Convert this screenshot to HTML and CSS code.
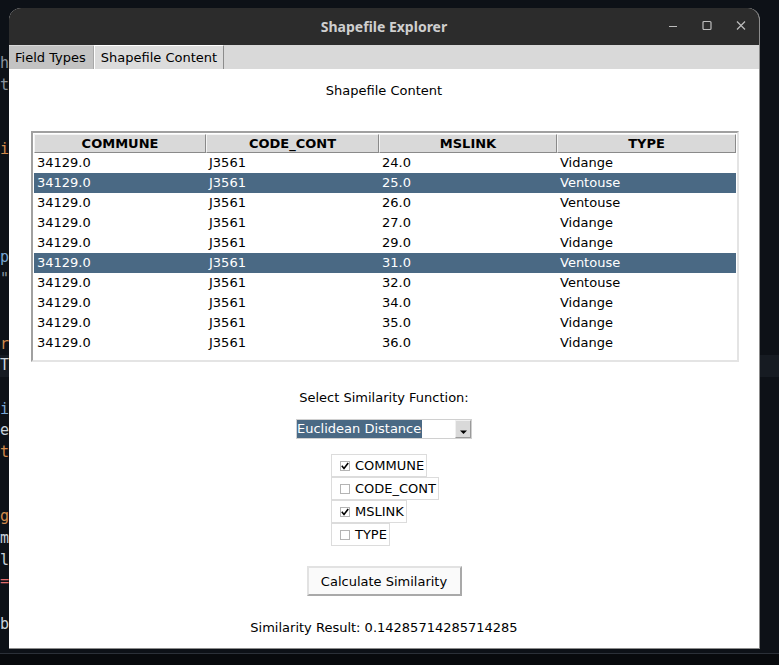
FILE: index.html
```html
<!DOCTYPE html>
<html>
<head>
<meta charset="utf-8">
<title>Shapefile Explorer</title>
<link rel="stylesheet" href="styles.css">
</head>
<body>
<div class="desktop">
  <pre class="editor"><span class="ln c-gray">h</span>
<span class="ln c-gray">t</span>
<span class="ln"> </span>
<span class="ln"> </span>
<span class="ln c-orange">i</span>
<span class="ln"> </span>
<span class="ln"> </span>
<span class="ln"> </span>
<span class="ln"> </span>
<span class="ln c-blue">p</span>
<span class="ln c-gray">"</span>
<span class="ln"> </span>
<span class="ln"> </span>
<span class="ln c-orange">r</span>
<span class="ln cur c-light">T</span>
<span class="ln"> </span>
<span class="ln c-blue">i</span>
<span class="ln c-light">e</span>
<span class="ln c-orange">t</span>
<span class="ln"> </span>
<span class="ln"> </span>
<span class="ln c-orange">g</span>
<span class="ln c-light">m</span>
<span class="ln c-light">l</span>
<span class="ln c-red">=</span>
<span class="ln"> </span>
<span class="ln c-light">b</span></pre>
  <div class="bottombar"></div>

  <div class="window">
    <div class="titlebar">
      <span class="title">Shapefile Explorer</span>
      <div class="controls">
        <svg width="12" height="12" viewBox="0 0 12 12"><path d="M2 6.5H10" stroke="#bdbdbd" stroke-width="1.2" fill="none"/></svg>
        <svg width="12" height="12" viewBox="0 0 12 12"><rect x="2" y="1.5" width="8" height="8" rx="1" stroke="#bdbdbd" stroke-width="1.2" fill="none"/></svg>
        <svg width="12" height="12" viewBox="0 0 12 12"><path d="M2 1.5L10 9.5M10 1.5L2 9.5" stroke="#bdbdbd" stroke-width="1.2" fill="none"/></svg>
      </div>
    </div>
    <div class="tabs">
      <div class="tab">Field Types</div>
      <div class="tab active">Shapefile Content</div>
    </div>
    <div class="pane">
      <div class="heading">Shapefile Content</div>
      <div class="tree">
        <div class="trow thead">
          <div class="th">COMMUNE</div>
          <div class="th">CODE_CONT</div>
          <div class="th">MSLINK</div>
          <div class="th">TYPE</div>
        </div>
        <div class="trow"><div class="td">34129.0</div><div class="td">J3561</div><div class="td">24.0</div><div class="td">Vidange</div></div>
        <div class="trow sel"><div class="td">34129.0</div><div class="td">J3561</div><div class="td">25.0</div><div class="td">Ventouse</div></div>
        <div class="trow"><div class="td">34129.0</div><div class="td">J3561</div><div class="td">26.0</div><div class="td">Ventouse</div></div>
        <div class="trow"><div class="td">34129.0</div><div class="td">J3561</div><div class="td">27.0</div><div class="td">Vidange</div></div>
        <div class="trow"><div class="td">34129.0</div><div class="td">J3561</div><div class="td">29.0</div><div class="td">Vidange</div></div>
        <div class="trow sel"><div class="td">34129.0</div><div class="td">J3561</div><div class="td">31.0</div><div class="td">Ventouse</div></div>
        <div class="trow"><div class="td">34129.0</div><div class="td">J3561</div><div class="td">32.0</div><div class="td">Ventouse</div></div>
        <div class="trow"><div class="td">34129.0</div><div class="td">J3561</div><div class="td">34.0</div><div class="td">Vidange</div></div>
        <div class="trow"><div class="td">34129.0</div><div class="td">J3561</div><div class="td">35.0</div><div class="td">Vidange</div></div>
        <div class="trow"><div class="td">34129.0</div><div class="td">J3561</div><div class="td">36.0</div><div class="td">Vidange</div></div>
      </div>

      <div class="label">Select Similarity Function:</div>
      <div class="combo">
        <span class="combo-text"><span class="combo-sel">Euclidean Distance</span></span>
        <span class="combo-btn"><svg width="9" height="6" viewBox="0 0 9 6"><path d="M1 1.5H8L4.5 5Z" fill="#000"/></svg></span>
      </div>

      <div class="checks">
        <label class="check"><span class="box"><svg width="8" height="8" viewBox="0 0 8 8"><path d="M0.8 3.8L3 6.4L7.2 1" stroke="#000" stroke-width="1.6" fill="none"/></svg></span>COMMUNE</label>
        <label class="check"><span class="box"></span>CODE_CONT</label>
        <label class="check"><span class="box"><svg width="8" height="8" viewBox="0 0 8 8"><path d="M0.8 3.8L3 6.4L7.2 1" stroke="#000" stroke-width="1.6" fill="none"/></svg></span>MSLINK</label>
        <label class="check"><span class="box"></span>TYPE</label>
      </div>

      <button class="btn">Calculate Similarity</button>
      <div class="result">Similarity Result: 0.14285714285714285</div>
    </div>
  </div>
</div>
</body>
</html>
```

FILE: styles.css
```css
* { box-sizing: border-box; }

html, body {
  margin: 0;
  padding: 0;
}

body {
  width: 779px;
  height: 665px;
  overflow: hidden;
  background: #0d1117;
  font-family: "DejaVu Sans", sans-serif;
  font-size: 13px;
  color: #000;
}

.desktop {
  position: relative;
  width: 779px;
  height: 665px;
  background: #0d1117;
}

.editor {
  position: absolute;
  left: 0;
  top: 53px;
  width: 779px;
  margin: 0;
  font-family: "DejaVu Sans Mono", monospace;
  font-size: 15px;
  line-height: 21.6px;
}

.ln {
  display: inline-block;
  width: 779px;
  height: 21.6px;
}

.cur { background: #161b22; }
.c-gray { color: #8b949e; }
.c-light { color: #c9d1d9; }
.c-blue { color: #79a6d2; }
.c-orange { color: #d18a4b; }
.c-red { color: #e06c6c; }

.bottombar {
  position: absolute;
  left: 0;
  top: 653px;
  width: 779px;
  height: 12px;
  background: #080a0d;
  border-top: 1px solid #2b3038;
}

.window {
  position: absolute;
  left: 9px;
  top: 8px;
  width: 751px;
  height: 641px;
  display: flex;
  flex-direction: column;
  border-radius: 12px 12px 0 0;
  overflow: hidden;
  background: #ffffff;
  border-right: 1px solid #8c8c8c;
  border-bottom: 1px solid #8c8c8c;
}

.titlebar {
  height: 37px;
  flex: none;
  background: #2c2c2c;
  display: flex;
  align-items: center;
  justify-content: center;
  position: relative;
}

.title {
  font-family: "Noto Sans", sans-serif;
  font-weight: 700;
  font-size: 14px;
  color: #cfcfcf;
}

.controls {
  position: absolute;
  right: 12px;
  top: 12px;
  display: flex;
  gap: 22px;
}

.controls svg { display: block; }

.tabs {
  height: 24px;
  flex: none;
  background: #d9d9d9;
  display: flex;
  align-items: flex-end;
}

.tab {
  height: 23px;
  padding: 0 7px 0 6px;
  display: flex;
  align-items: center;
  background: #c3c3c3;
  border-right: 1px solid #a8a8a8;
  color: #000;
}

.tab.active {
  height: 24px;
  padding: 0 6px 0 6px;
  background: #dcdcdc;
  border-left: 1px solid #ffffff;
  border-top: 1px solid #ffffff;
  border-right: 1px solid #8c8c8c;
}

.pane {
  flex: 1;
  background: #ffffff;
  display: flex;
  flex-direction: column;
  align-items: center;
}

.heading {
  margin-top: 14px;
  line-height: 16px;
}

.tree {
  align-self: flex-start;
  margin-left: 22px;
  margin-top: 32px;
  width: 708px;
  height: 231px;
  border: 2px solid;
  border-color: #a0a0a0 #e4e4e4 #e4e4e4 #a0a0a0;
  padding: 1px;
  background: #ffffff;
}

.trow {
  display: grid;
  grid-template-columns: 172px 173px 178px 179px;
  height: 20px;
}

.thead { height: 19px; }

.th {
  background: #d9d9d9;
  border-top: 1px solid #f4f4f4;
  border-left: 1px solid #f4f4f4;
  border-right: 1px solid #8a8a8a;
  border-bottom: 1px solid #8a8a8a;
  font-weight: 700;
  text-align: center;
  line-height: 17px;
}

.td {
  padding-left: 3px;
  line-height: 20px;
  white-space: nowrap;
}

.trow.sel {
  background: #4a6984;
  color: #ffffff;
}

.label {
  margin-top: 28px;
  line-height: 16px;
}

.combo {
  margin-top: 13px;
  width: 176px;
  height: 20px;
  border: 1px solid #d0d0d0;
  display: flex;
  background: #fff;
}

.combo-text {
  flex: 1;
  display: flex;
  align-items: stretch;
}

.combo-sel {
  background: #4a6984;
  color: #ffffff;
  line-height: 18px;
  padding-right: 1px;
}

.combo-btn {
  width: 16px;
  background: #d9d9d9;
  border: 1px solid;
  border-color: #f0f0f0 #9a9a9a #9a9a9a #f0f0f0;
  display: flex;
  align-items: flex-end;
  justify-content: center;
  padding-bottom: 2px;
}

.combo-btn svg { display: block; }

.checks {
  margin-top: 15px;
  margin-left: 2px;
  display: flex;
  flex-direction: column;
  align-items: flex-start;
}

.check {
  height: 23px;
  display: flex;
  align-items: center;
  padding: 0 2px 0 8px;
  border: 1px solid #dcdcdc;
  gap: 5px;
}

.box {
  width: 10px;
  height: 10px;
  border: 1px solid #b4b4b4;
  background: #fff;
  display: flex;
  align-items: center;
  justify-content: center;
}

.box svg { display: block; }

.btn {
  margin-top: 20px;
  width: 155px;
  height: 30px;
  font-family: "DejaVu Sans", sans-serif;
  font-size: 13px;
  color: #000;
  background: #fafafa;
  border: 2px solid;
  border-color: #e2e2e2 #a9a9a9 #a9a9a9 #e2e2e2;
  padding: 0;
}

.result {
  margin-top: 24px;
  line-height: 16px;
}
```
